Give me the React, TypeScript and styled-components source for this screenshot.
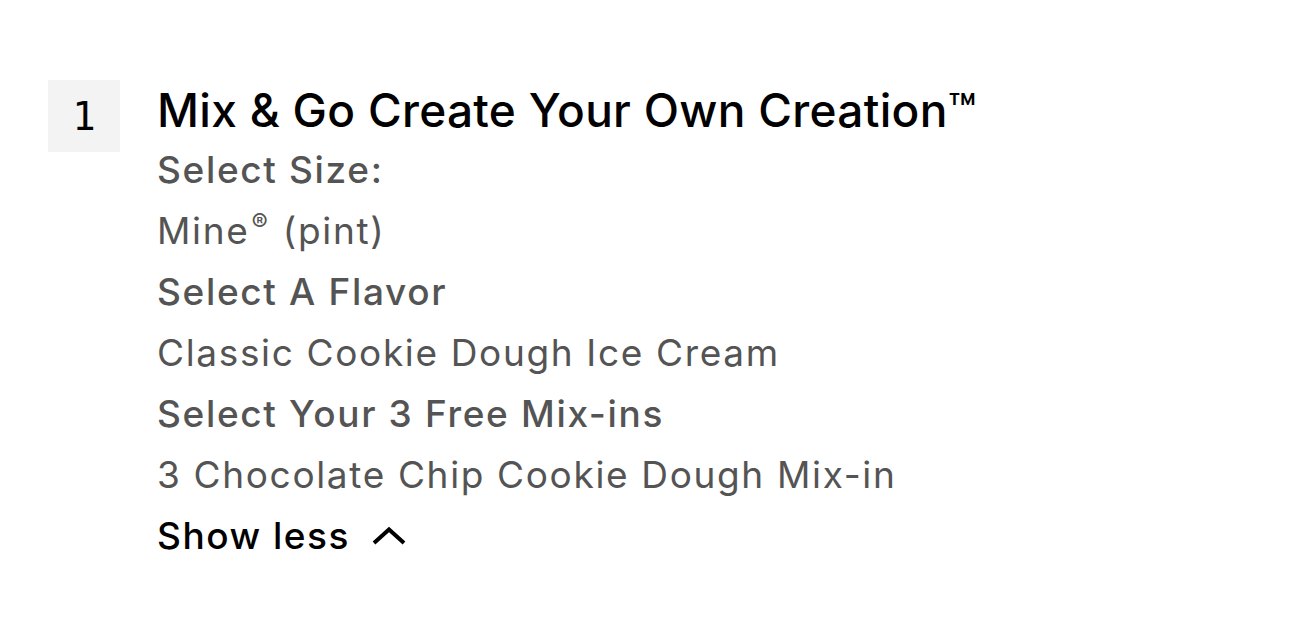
import React from "react";
import styled, { createGlobalStyle } from "styled-components";

const Global = createGlobalStyle`
  html, body { margin: 0; padding: 0; background: #ffffff; }
  body { font-family: Inter, "Noto Sans", sans-serif; -webkit-font-smoothing: antialiased; }
`;

const Page = styled.div`
  padding: 80px 48px 0 48px;
  display: flex;
  align-items: flex-start;
  gap: 37px;
`;

const QtyBox = styled.div`
  width: 72px;
  height: 72px;
  background: #f3f3f3;
  display: flex;
  align-items: center;
  justify-content: center;
  font-family: "DejaVu Sans Mono", "Liberation Mono", monospace;
  font-size: 39px;
  line-height: 1;
  color: #000;
  flex-shrink: 0;
`;

const Details = styled.div`
  display: flex;
  flex-direction: column;
`;

const Title = styled.div`
  font-size: 46px;
  font-weight: 500;
  line-height: 61px;
  color: #000;
  letter-spacing: 0.3px;
`;

const Line = styled.div<{ $bold?: boolean }>`
  font-size: 37px;
  line-height: 58px;
  padding-bottom: 3px;
  color: #545454;
  letter-spacing: 1.65px;
  font-weight: ${(p) => (p.$bold ? 500 : 400)};
`;

const Toggle = styled.button`
  all: unset;
  display: flex;
  align-items: center;
  gap: 22px;
  font-family: Inter, "Noto Sans", sans-serif;
  font-size: 37px;
  font-weight: 500;
  letter-spacing: 1.5px;
  line-height: 58px;
  padding-bottom: 3px;
  color: #000;
  cursor: pointer;
`;

const Sup = styled.sup`
  font-size: 0.66em;
  vertical-align: 0.55em;
  line-height: 0;
  letter-spacing: 0;
  margin-left: 2px;
  margin-right: 3px;
`;

export default function App() {
  return (
    <>
      <Global />
      <Page>
        <QtyBox>1</QtyBox>
        <Details>
          <Title>Mix &amp; Go Create Your Own Creation™</Title>
          <Line $bold>Select Size:</Line>
          <Line>
            Mine<Sup>®</Sup> (pint)
          </Line>
          <Line $bold>Select A Flavor</Line>
          <Line>Classic Cookie Dough Ice Cream</Line>
          <Line $bold>Select Your 3 Free Mix-ins</Line>
          <Line>3 Chocolate Chip Cookie Dough Mix-in</Line>
          <Toggle>
            Show less
            <svg width="34" height="20" viewBox="0 0 34 20" fill="none">
              <path d="M2 17 L17 3.5 L32 17" stroke="#000" strokeWidth="4" />
            </svg>
          </Toggle>
        </Details>
      </Page>
    </>
  );
}
